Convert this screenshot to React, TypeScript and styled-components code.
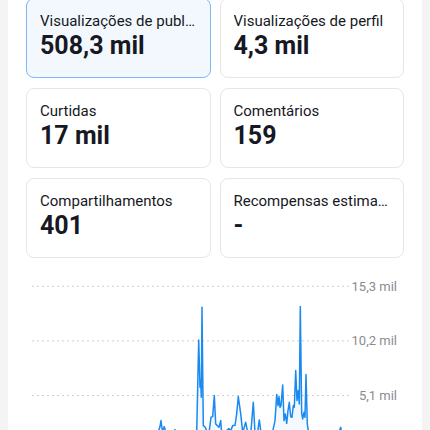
import React from "react";
import styled, { createGlobalStyle } from "styled-components";

const GlobalStyle = createGlobalStyle`
  html, body {
    margin: 0;
    padding: 0;
    background: #f4f4f4;
    font-family: Roboto, "Liberation Sans", "Noto Sans", sans-serif;
  }
`;

const Panel = styled.div`
  margin: 0 8px;
  min-height: 600px;
  background: #ffffff;
  padding: 0 18px;
  box-sizing: border-box;
`;

const StatGrid = styled.div`
  display: grid;
  grid-template-columns: 1fr 1fr;
  column-gap: 9px;
  row-gap: 10px;
  margin-top: -2px;
`;

const StatCard = styled.div<{ $active?: boolean }>`
  height: 80px;
  box-sizing: border-box;
  padding: 12px 12px 0 13px;
  border-radius: 8px;
  border: 1px solid ${(p) => (p.$active ? "#7db8f5" : "#e6e6e6")};
  background: ${(p) => (p.$active ? "#f3f8fe" : "#ffffff")};
  min-width: 0;
  display: flex;
  flex-direction: column;
`;

const StatLabel = styled.div`
  font-size: 15px;
  line-height: 20px;
  color: #161823;
  white-space: nowrap;
  overflow: hidden;
  text-overflow: ellipsis;
`;

const StatValue = styled.div`
  font-size: 25px;
  line-height: 30px;
  font-weight: 700;
  color: #161823;
`;

const ChartRow = styled.div`
  display: flex;
  margin-top: 1px;
  padding-left: 6px;
`;

const Plot = styled.svg`
  flex: 1;
  height: 200px;
  overflow: visible;
  display: block;
`;

const Axis = styled.div`
  width: 55px;
  display: flex;
  flex-direction: column;
`;

const AxisLabel = styled.div`
  height: 54.6px;
  display: flex;
  align-items: center;
  justify-content: flex-end;
  padding-right: 7px;
  font-size: 13px;
  color: #8a8b91;
  white-space: nowrap;
`;

const stats = [
  { label: "Visualizações de publicações", value: "508,3 mil", active: true },
  { label: "Visualizações de perfil", value: "4,3 mil" },
  { label: "Curtidas", value: "17 mil" },
  { label: "Comentários", value: "159" },
  { label: "Compartilhamentos", value: "401" },
  { label: "Recompensas estimadas", value: "-" },
];

// traced from the page, in page pixels
const raw: [number, number][] = [
  [32, 444], [40, 446], [48, 443], [56, 445], [64, 442], [72, 446], [80, 444],
  [88, 441], [96, 445], [104, 443], [112, 440], [120, 444], [128, 441], [136, 443],
  [144, 438], [152, 441], [156, 436], [158, 432], [160, 426], [161, 420], [162, 428],
  [163, 430], [164.3, 426], [166, 432], [168, 434], [170, 432], [172, 435], [175, 429],
  [178, 436], [182, 434], [186, 437], [190, 433], [194, 436], [196.7, 432], [198.7, 339.3],
  [200, 386.7], [200.7, 380], [201.3, 396.7], [202, 306.7], [203.3, 425], [205.3, 426.7],
  [207.3, 432], [209.3, 430], [211, 416.7], [212.7, 416], [214.3, 395], [215.7, 423.3],
  [217.3, 425], [219, 426.7], [220.7, 420], [221.7, 433], [225, 432], [228.7, 428],
  [230.7, 430], [232.7, 425], [235, 424.7], [236.7, 413], [238.3, 396], [240.7, 413],
  [242.7, 432], [245.7, 421.7], [248, 433], [251, 430], [253.3, 401.7], [255, 432],
  [257, 436], [259.3, 419.3], [260.7, 430], [263, 436], [266, 433], [269, 437],
  [272, 434], [275, 420], [276.7, 394], [278, 405], [279, 396], [280, 406.7], [281, 405],
  [282.7, 384.3], [284, 420], [285.3, 413.3], [286.7, 422.7], [288, 410], [289.3, 401.7],
  [290.7, 416], [292, 416.7], [293.3, 405], [294.3, 406.7], [295.7, 370], [297, 400],
  [298.3, 390], [299.3, 403.3], [300.3, 306], [301.7, 413.3], [302.7, 418.3], [304, 411.7],
  [305, 416.7], [306, 374], [307.3, 423.3], [308.7, 433], [312, 436], [316, 434],
  [320, 438], [324, 435], [328, 437], [332, 434], [336, 436], [339, 432], [340.7, 426.7],
  [342, 434], [345, 437], [349, 440],
];

const points = raw.map(([x, y]) => [x - 32, y - 258.4]);
const linePath = points.map(([x, y], i) => `${i ? "L" : "M"}${x.toFixed(1)} ${y.toFixed(1)}`).join(" ");
const zeroY = 191;
const areaPath = `${linePath} L${points[points.length - 1][0]} ${zeroY} L0 ${zeroY} Z`;

const gridY = [27.3, 81.9, 136.5];
const ticks = ["15,3 mil", "10,2 mil", "5,1 mil"];

export default function App() {
  return (
    <>
      <GlobalStyle />
      <Panel>
        <StatGrid>
          {stats.map((s) => (
            <StatCard key={s.label} $active={s.active}>
              <StatLabel>{s.label}</StatLabel>
              <StatValue>{s.value}</StatValue>
            </StatCard>
          ))}
        </StatGrid>
        <ChartRow>
          <Plot>
            <defs>
              <linearGradient id="fillGrad" x1="0" y1="0" x2="0" y2="1">
                <stop offset="0" stopColor="#1e8cf0" stopOpacity="0.14" />
                <stop offset="1" stopColor="#1e8cf0" stopOpacity="0.03" />
              </linearGradient>
            </defs>
            {gridY.map((y) => (
              <line key={y} x1="0" x2="100%" y1={y} y2={y} stroke="#cfcfcf" strokeWidth="1" strokeDasharray="2 3" />
            ))}
            <path d={areaPath} fill="url(#fillGrad)" />
            <path d={linePath} fill="none" stroke="#1a8af0" strokeWidth="1.5" strokeLinejoin="round" />
          </Plot>
          <Axis>
            {ticks.map((t) => (
              <AxisLabel key={t}>{t}</AxisLabel>
            ))}
          </Axis>
        </ChartRow>
      </Panel>
    </>
  );
}
